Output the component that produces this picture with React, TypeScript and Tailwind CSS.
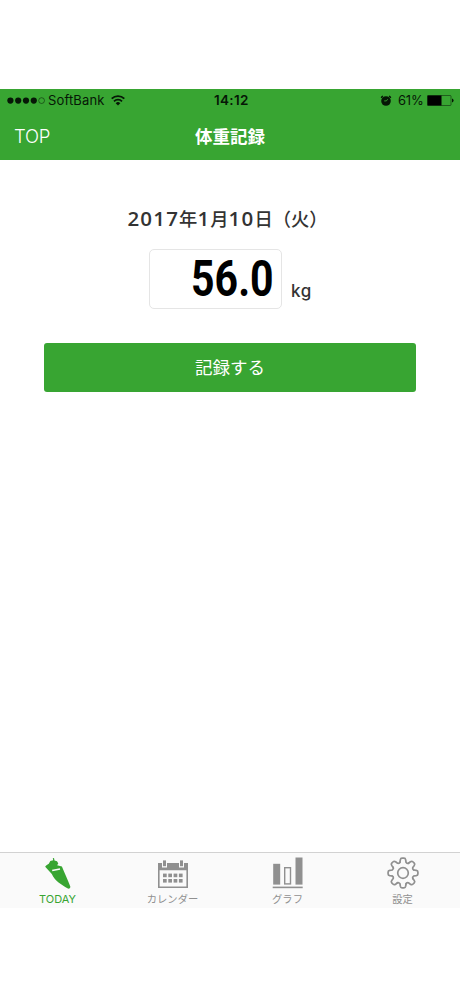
import type { ReactNode } from 'react';

const TEETH = [0, 45, 90, 135, 180, 225, 270, 315];
const CALENDAR_COLS = [6, 11.3, 16.6, 21.9];

function StatusBar() {
  return (
    <div className="relative flex h-[23px] items-center justify-between pl-[7px] pr-[6px] text-[#061706]">
      <div className="flex items-center">
        <svg width="39" height="8" viewBox="0 0 39 8" fill="currentColor">
          <circle cx="3.4" cy="3.6" r="3.1" />
          <circle cx="11.2" cy="3.6" r="3.1" />
          <circle cx="19" cy="3.6" r="3.1" />
          <circle cx="26.8" cy="3.6" r="3.1" />
          <circle cx="34.6" cy="3.6" r="2.9" fill="none" stroke="currentColor" strokeWidth="0.5" />
        </svg>
        <span className="ml-[2px] w-[57px] whitespace-nowrap text-[13px] tracking-[0.15px]">SoftBank</span>
        <svg className="ml-[6px]" width="14" height="11" viewBox="0 0 14 11" fill="none" stroke="currentColor" strokeWidth="1.8">
          <path d="M.7 3.6a9 9 0 0 1 12.6 0M3 6.3a5.7 5.7 0 0 1 8 0" />
          <path d="M7 10.4 4.7 8.2a3.2 3.2 0 0 1 4.6 0z" fill="currentColor" stroke="none" />
        </svg>
      </div>
      <span className="absolute left-[214px] text-[13.5px] font-semibold tracking-[0.3px]">14:12</span>
      <div className="flex items-center">
        <svg width="12" height="12" viewBox="0 0 12 12">
          <circle cx="6" cy="6" r="4.8" fill="currentColor" />
          <path d="M1.3 3Q1.5 1.6 3 1.2M10.7 3Q10.5 1.6 9 1.2" fill="none" stroke="currentColor" strokeWidth="1.2" />
          <path d="M4.2 5.9h2.2l1.3-1.7" fill="none" stroke="#38a532" strokeWidth=".9" />
        </svg>
        <span className="ml-[6px] w-[26px] whitespace-nowrap text-[13px] tracking-[-0.2px]">61%</span>
        <svg className="ml-[3px]" width="27" height="11" viewBox="0 0 27 11">
          <rect x=".5" y=".5" width="23.5" height="10" rx=".8" fill="none" stroke="currentColor" strokeWidth=".5" />
          <rect x=".5" y=".5" width="14" height="10" fill="#000" />
          <path d="M25 3.5q1.6.4 1.6 2T25 7.5z" fill="currentColor" />
        </svg>
      </div>
    </div>
  );
}

function CarrotIcon() {
  return (
    <svg width="32" height="34" viewBox="0 0 32 34">
      <path
        d="M10.8 1.2 12 .9l.5 2.6 2.5.8 1.3 2.2-1.2 1.8 4.8 1.3c2.7 6.4 5.9 13.5 8.4 20 .4 1.7-1.4 2.6-2.9 1.7C19.7 27.8 12.8 24 9.8 17L3.2 9.8c.3-1.5 2-1.7 3.6-3.1L8.3 4l2.9-.7z"
        fill="currentColor"
      />
      <path d="m10.2 13.4 7.8-1.3" stroke="#fafafa" strokeWidth="1.5" />
    </svg>
  );
}

function CalendarIcon() {
  return (
    <svg width="32" height="34" viewBox="0 0 32 34" fill="currentColor">
      <path
        fillRule="evenodd"
        d="M1 6h4v4.5h5V6h12v4.5h5V6h4v25H1zM2.6 13.2v16.2h26.8V13.2z"
      />
      <rect x="6" y="3.4" width="3" height="5.8" />
      <rect x="23" y="3.4" width="3" height="5.8" />
      {CALENDAR_COLS.map(x => (
        <g key={x}>
          <rect x={x} y="16.6" width="3.7" height="3.6" />
          <rect x={x} y="22" width="3.7" height="3.6" />
        </g>
      ))}
    </svg>
  );
}

function GraphIcon() {
  return (
    <svg width="32" height="34" viewBox="0 0 32 34" fill="currentColor">
      <rect x="1.2" y="6.8" width="7" height="20.8" />
      <rect x="12.7" y="10.7" width="5.8" height="16.2" fill="none" stroke="currentColor" strokeWidth="1.4" />
      <rect x="23.5" y=".5" width="7" height="27.1" />
      <rect x=".7" y="29.6" width="30" height="1.6" />
    </svg>
  );
}

function GearIcon() {
  return (
    <svg width="32" height="34" viewBox="-16 -16 32 34" fill="none" stroke="currentColor" strokeWidth="1.7" strokeLinecap="round">
      {TEETH.map(angle => (
        <path
          key={angle}
          transform={`rotate(${angle})`}
          d="M-3-10.8-2.7-13.2Q-2.4-14.9-1-14.9H1Q2.4-14.9 2.7-13.2L3-10.8Q4.3-9 5.52-9.76"
        />
      ))}
      <circle r="5.3" />
    </svg>
  );
}

interface TabProps {
  label: string;
  active?: boolean;
  children: ReactNode;
}

function Tab({ label, active, children }: TabProps) {
  return (
    <button className={`flex flex-1 flex-col items-center pt-[4px] ${active ? 'text-[#38a532]' : 'text-[#909090]'}`}>
      {children}
      <span className={`mt-px leading-[14px] ${active ? 'text-[11px]' : 'text-[10.3px]'}`}>{label}</span>
    </button>
  );
}

function Digits({ children }: { children: string }) {
  return <span className="font-['Open_Sans',sans-serif] text-[20.5px] font-semibold tracking-[1.2px]">{children}</span>;
}

export default function App() {
  return (
    <div className="flex h-[996px] w-[460px] flex-col bg-white pb-[88px] pt-[89px] font-['Inter','Noto_Sans_CJK_JP',sans-serif]">
      <header className="h-[71px] shrink-0 bg-[#38a532]">
        <StatusBar />
        <div className="grid h-[48px] grid-cols-3 items-center text-white">
          <button className="pl-[14px] text-left text-[18.5px] font-light leading-[26px] tracking-[-0.2px]">TOP</button>
          <h1 className="pt-px text-center text-[17.5px] font-bold leading-[26px]">体重記録</h1>
        </div>
      </header>

      <main className="flex flex-1 flex-col items-center pt-[44px] text-[#333]">
        <p className="mr-[5px] h-[28px] whitespace-nowrap text-[18.3px] font-medium leading-[28px]">
          <Digits>2017</Digits>年<Digits>1</Digits>月<Digits>10</Digits>日（火）
        </p>
        <div className="mt-[17px] flex w-full items-end pl-[149px]">
          <div className="flex h-[60px] w-[133px] items-center justify-end rounded-[5px] border border-[#e5e5e5] pr-[7px]">
            <span className="origin-right scale-x-[0.82] font-['Roboto',sans-serif] text-[50px] font-bold leading-[60px] text-black">56.0</span>
          </div>
          <span className="mb-[6px] ml-[9px] text-[17px] font-medium leading-[24px] tracking-[0.6px]">kg</span>
        </div>
        <button className="mt-[34px] h-[49px] w-[372px] rounded-[3px] bg-[#38a532] pt-[2px] text-[17.5px] font-normal text-white">
          記録する
        </button>
      </main>

      <nav className="flex h-[56px] shrink-0 border-t border-[#d2d2d2] bg-[#fafafa]">
        <Tab label="TODAY" active>
          <CarrotIcon />
        </Tab>
        <Tab label="カレンダー">
          <CalendarIcon />
        </Tab>
        <Tab label="グラフ">
          <GraphIcon />
        </Tab>
        <Tab label="設定">
          <GearIcon />
        </Tab>
      </nav>
    </div>
  );
}
